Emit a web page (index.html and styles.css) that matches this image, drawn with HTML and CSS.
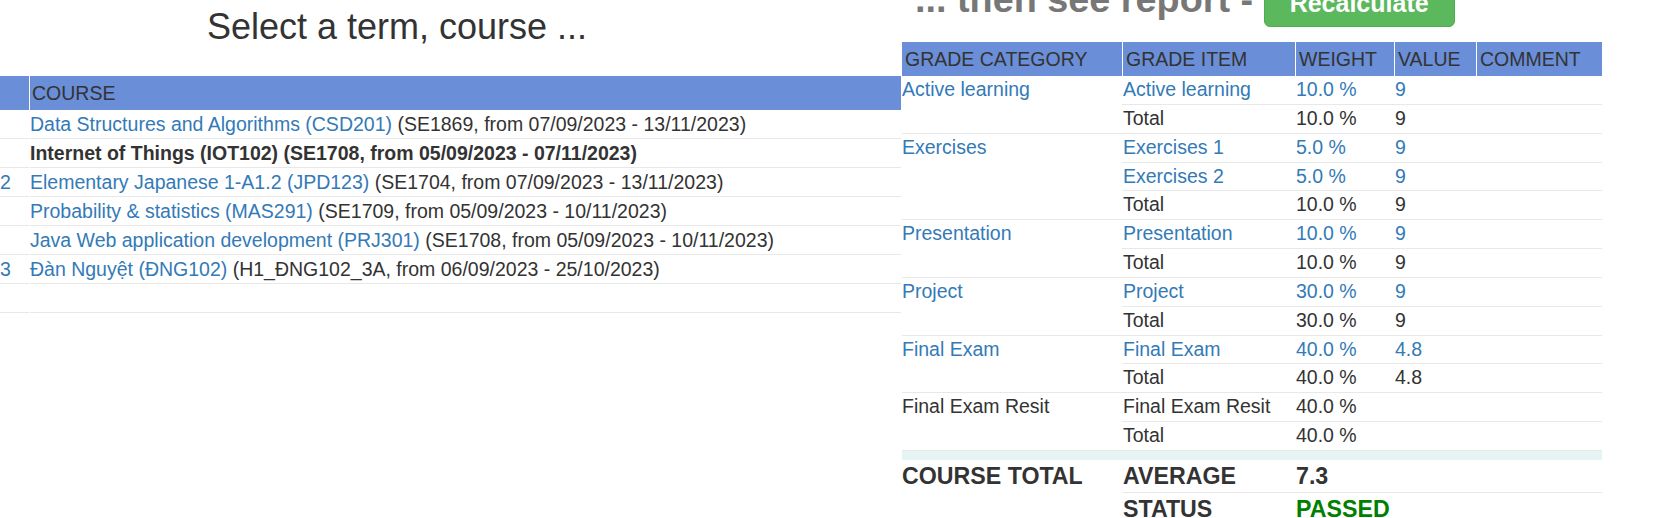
FILE: index.html
```html
<!DOCTYPE html>
<html lang="en">
<head>
<meta charset="utf-8">
<title>Mark report</title>
<link rel="stylesheet" href="styles.css">
</head>
<body>
<div class="page">
  <section class="left">
    <h2 class="title">Select a term, course ...</h2>
    <div class="course-tables">
      <table class="terms">
        <thead><tr><th>&nbsp;</th></tr></thead>
        <tbody>
          <tr><td>&nbsp;</td></tr>
          <tr><td>&nbsp;</td></tr>
          <tr><td><a href="#">2</a></td></tr>
          <tr><td>&nbsp;</td></tr>
          <tr><td>&nbsp;</td></tr>
          <tr><td><a href="#">3</a></td></tr>
          <tr><td>&nbsp;</td></tr>
        </tbody>
      </table>
      <table class="courses">
        <thead><tr><th>COURSE</th></tr></thead>
        <tbody>
          <tr><td><a href="#">Data Structures and Algorithms (CSD201)</a> (SE1869, from 07/09/2023 - 13/11/2023)</td></tr>
          <tr><td><b>Internet of Things (IOT102) (SE1708, from 05/09/2023 - 07/11/2023)</b></td></tr>
          <tr><td><a href="#">Elementary Japanese 1-A1.2 (JPD123)</a> (SE1704, from 07/09/2023 - 13/11/2023)</td></tr>
          <tr><td><a href="#">Probability &amp; statistics (MAS291)</a> (SE1709, from 05/09/2023 - 10/11/2023)</td></tr>
          <tr><td><a href="#">Java Web application development (PRJ301)</a> (SE1708, from 05/09/2023 - 10/11/2023)</td></tr>
          <tr><td><a href="#">Đàn Nguyệt (ĐNG102)</a> (H1_ĐNG102_3A, from 06/09/2023 - 25/10/2023)</td></tr>
          <tr><td>&nbsp;</td></tr>
        </tbody>
      </table>
    </div>
  </section>

  <section class="right">
    <h2 class="report-title">... then see report - <button class="btn" type="button">Recalculate</button></h2>
    <table class="report">
      <thead>
        <tr>
          <th class="c-cat">GRADE CATEGORY</th>
          <th class="c-item">GRADE ITEM</th>
          <th class="c-weight">WEIGHT</th>
          <th class="c-value">VALUE</th>
          <th class="c-comment">COMMENT</th>
        </tr>
      </thead>
      <tbody>
        <tr><td rowspan="2" class="cat link">Active learning</td><td class="link">Active learning</td><td class="link">10.0 %</td><td class="link">9</td><td></td></tr>
        <tr><td>Total</td><td>10.0 %</td><td>9</td><td></td></tr>

        <tr><td rowspan="3" class="cat link">Exercises</td><td class="link">Exercises 1</td><td class="link">5.0 %</td><td class="link">9</td><td></td></tr>
        <tr><td class="link">Exercises 2</td><td class="link">5.0 %</td><td class="link">9</td><td></td></tr>
        <tr><td>Total</td><td>10.0 %</td><td>9</td><td></td></tr>

        <tr><td rowspan="2" class="cat link">Presentation</td><td class="link">Presentation</td><td class="link">10.0 %</td><td class="link">9</td><td></td></tr>
        <tr><td>Total</td><td>10.0 %</td><td>9</td><td></td></tr>

        <tr><td rowspan="2" class="cat link">Project</td><td class="link">Project</td><td class="link">30.0 %</td><td class="link">9</td><td></td></tr>
        <tr><td>Total</td><td>30.0 %</td><td>9</td><td></td></tr>

        <tr><td rowspan="2" class="cat link">Final Exam</td><td class="link">Final Exam</td><td class="link">40.0 %</td><td class="link">4.8</td><td></td></tr>
        <tr><td>Total</td><td>40.0 %</td><td>4.8</td><td></td></tr>

        <tr><td rowspan="2" class="cat">Final Exam Resit</td><td>Final Exam Resit</td><td>40.0 %</td><td></td><td></td></tr>
        <tr><td>Total</td><td>40.0 %</td><td></td><td></td></tr>

        <tr class="spacer"><td colspan="5"></td></tr>

        <tr class="sum"><td rowspan="2" class="cat sum-label">COURSE TOTAL</td><td>AVERAGE</td><td>7.3</td><td></td><td></td></tr>
        <tr class="sum"><td>STATUS</td><td class="passed">PASSED</td><td></td><td></td></tr>
      </tbody>
    </table>
  </section>
</div>
</body>
</html>
```

FILE: styles.css
```css
html, body {
  margin: 0;
  padding: 0;
  background: #fff;
}

body {
  font-family: "Liberation Sans", Arial, sans-serif;
  font-size: 19.5px;
  color: #333;
  overflow: hidden;
}

a {
  color: #337ab7;
  text-decoration: none;
}

.page {
  display: flex;
  align-items: flex-start;
  gap: 1px;
}

/* ---------- left: term / course ---------- */
.left {
  flex: none;
  width: 1008px;
  margin-left: -107px;
}

.title {
  margin: 7px 0 30px;
  font-size: 36px;
  font-weight: normal;
  line-height: 39px;
  text-align: center;
  color: #333;
}

.course-tables {
  display: flex;
  gap: 1px;
}

table {
  border-collapse: separate;
  border-spacing: 0;
}

th {
  background: #6a8ed8;
  color: #333;
  font-weight: normal;
  text-align: left;
  line-height: 28px;
  padding: 3px 3px;
  white-space: nowrap;
}

td {
  line-height: 28px;
  padding: 0;
  border-bottom: 1px solid #e8e8e8;
  white-space: nowrap;
  vertical-align: top;
}

.terms {
  width: 136px;
}

.terms td {
  padding-left: 107px;
}

.courses {
  width: 871px;
}

.courses th {
  padding-left: 2px;
}

/* ---------- right: report ---------- */
.right {
  flex: none;
  width: 700px;
}

.report-title {
  margin: -21px 0 15px 13px;
  font-size: 37.8px;
  font-weight: bold;
  line-height: 41px;
  color: #777;
  white-space: nowrap;
}

.btn {
  display: inline-block;
  vertical-align: baseline;
  margin: 0;
  padding: 6px 25px;
  font-family: "Liberation Sans", Arial, sans-serif;
  font-size: 25px;
  font-weight: bold;
  line-height: 33px;
  color: #fff;
  background: #5cb85c;
  border: 1px solid #4cae4c;
  border-radius: 6px;
}

.report {
  width: 700px;
  table-layout: fixed;
}

.report th {
  box-sizing: border-box;
}

.report th + th {
  border-left: 1px solid #fff;
}

.c-cat { width: 220px; }
.c-item { width: 173px; }
.c-weight { width: 99px; }
.c-value { width: 82px; }
.c-comment { width: 126px; }

.report td {
  line-height: 27.85px;
  padding: 0 0 0 1px;
}

.report td.cat {
  padding-left: 0;
}

.report td.link {
  color: #337ab7;
}

.report .spacer td {
  height: 9px;
  line-height: 0;
  padding: 0;
  background: #e7f4f4;
  border-bottom: 0;
}

.report .sum td {
  font-size: 23.2px;
  font-weight: bold;
  line-height: 32px;
}

.report .sum td.sum-label {
  border-bottom: 0;
}

.report .passed {
  color: #008000;
}
```
